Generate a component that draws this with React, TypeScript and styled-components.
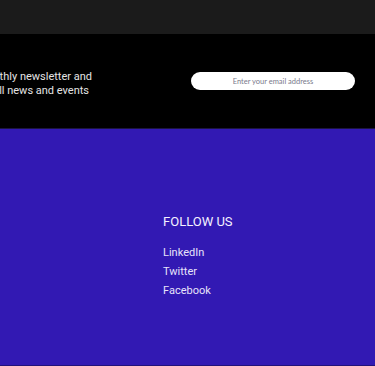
import React from "react";
import styled, { createGlobalStyle } from "styled-components";

const Global = createGlobalStyle`
  html, body { margin: 0; padding: 0; background: #3219b3; }
  body { font-family: Roboto, "Liberation Sans", sans-serif; overflow: hidden; }
  * { box-sizing: border-box; }
`;

const Page = styled.div`
  width: 375px;
  height: 366px;
  display: flex;
  flex-direction: column;
  overflow: hidden;
`;

const TopBar = styled.div`
  height: 34px;
  flex: none;
  background: #1b1b1b;
`;

const Newsletter = styled.section`
  height: 95px;
  flex: none;
  background: #000;
  border-bottom: 1px solid #1c1540;
  display: flex;
  align-items: center;
  justify-content: space-between;
  padding-right: 20px;
  overflow: hidden;
`;

const Lede = styled.div`
  flex: none;
  width: 300px;
  margin-left: -208px;
  margin-top: 5px;
  font-size: 11px;
  line-height: 14px;
  color: #e4e4e4;
  text-align: right;
`;

const LedeLine = styled.div<{ $inset?: number }>`
  white-space: nowrap;
  padding-right: ${(p) => p.$inset ?? 0}px;
`;

const EmailInput = styled.input`
  width: 164px;
  height: 18px;
  border: none;
  border-radius: 9px;
  background: #fff;
  font-family: Lato, "Open Sans", sans-serif;
  font-size: 7.5px;
  text-align: center;
  color: #333;
  outline: none;
  padding: 0 8px;
  &::placeholder { color: #7a7a8c; }
`;

const Footer = styled.footer`
  flex: 1;
  background: #3219b3;
  border-bottom: 1px solid #21127a;
  padding: 85px 0 0 163px;
`;

const Heading = styled.h3`
  margin: 0 0 13px;
  font-size: 13px;
  line-height: 16px;
  font-weight: 400;
  color: #f4f2ff;
`;

const LinkList = styled.ul`
  list-style: none;
  margin: 0;
  padding: 0;
`;

const LinkItem = styled.li`
  font-size: 11px;
  line-height: 19px;
  color: #e7e3fa;
`;

export default function App() {
  return (
    <>
      <Global />
      <Page>
        <TopBar />
        <Newsletter>
          <Lede>
            <LedeLine>Subscribe to our monthly newsletter and</LedeLine>
            <LedeLine $inset={3}>stay up to date with all news and events</LedeLine>
          </Lede>
          <EmailInput placeholder="Enter your email address" />
        </Newsletter>
        <Footer>
          <Heading>FOLLOW US</Heading>
          <LinkList>
            <LinkItem>LinkedIn</LinkItem>
            <LinkItem>Twitter</LinkItem>
            <LinkItem>Facebook</LinkItem>
          </LinkList>
        </Footer>
      </Page>
    </>
  );
}
